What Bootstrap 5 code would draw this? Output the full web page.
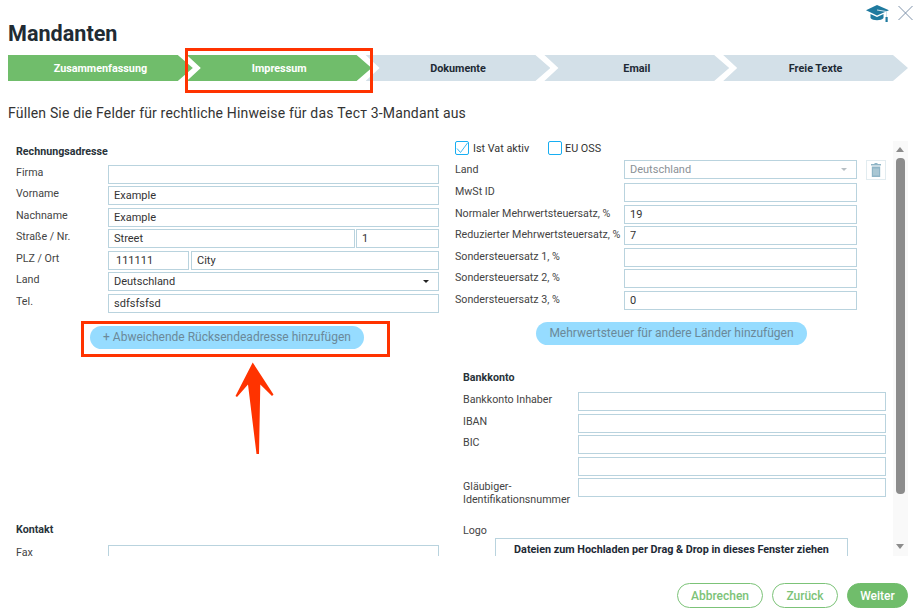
<!DOCTYPE html>
<html lang="de">
<head>
<meta charset="utf-8">
<title>Mandanten</title>
<link href="https://cdn.jsdelivr.net/npm/bootstrap@5.3.0/dist/css/bootstrap.min.css" rel="stylesheet">
<style>
html,body{height:609px;overflow:hidden;background:#fff}
body{font-family:Roboto,"Liberation Sans",sans-serif;font-size:10.8px;color:#333}
.shell{width:917px;height:609px;padding:21px 9px 0 8px}
.page-title{font-size:21.6px;line-height:26px;font-weight:700;color:#212b33;margin:0 0 8px}
.wizard{height:26px}
.wiz-step{flex:1 1 0;margin-left:-6px;height:26px;line-height:27px;text-align:center;font-size:10.8px;font-weight:700;color:#1e2a35;background:#d3e0e8;clip-path:polygon(0 0,calc(100% - 15px) 0,100% 50%,calc(100% - 15px) 100%,0 100%,14px 50%)}
.wiz-step:first-child{margin-left:0;clip-path:polygon(0 0,calc(100% - 15px) 0,100% 50%,calc(100% - 15px) 100%,0 100%)}
.wiz-step.done{background:#70bd6b;color:#fff}
.intro{font-size:14px;line-height:20px;margin:22px 0 7px;color:#333;letter-spacing:.165px}
.scroller{height:426px;overflow:hidden}
.pane-l{width:439px;flex:none;padding:15px 8px 0}
.pane-r{width:446px;flex:none;padding:11px 0 0 8px}
.sec-head{font-size:10.7px;line-height:14px;font-weight:700;color:#29333a}
.sec-first{margin-bottom:5.8px}
.sec-kontakt{margin:174px 0 8px}
.sec-bank{margin:26px 0 7px 8px}
.field{display:flex;height:19px;margin-bottom:2.5px;gap:1px}
.field.tight{gap:0;margin-bottom:2.6px}
.field.first{margin-bottom:4px}
.field.split{gap:2px}
.field.tall{height:auto;margin-bottom:18px}
.field-l{flex:none;line-height:14px;color:#444;white-space:nowrap;font-size:10.7px}
.pane-l .field-l{padding-top:1px}
.pane-r .field-l{padding-top:2px}
.pane-r .first .field-l{padding-top:3px}
.pane-r .bank .field-l{padding-top:1px}
.pane-r .bank .tall .field-l{padding-top:2px;line-height:13px}
.pane-r .bank .logo-l{padding-top:0;height:14px}
.l91{width:91px}.l169{width:169px}.l115{width:115px}
.l91.plz{margin-right:-1px}
.inp.form-control,.inp.form-select{height:19px;min-height:0;padding:0 5px;font-size:11px;line-height:17px;border:1px solid #b9d3de;border-radius:0;color:#333;background-image:none;box-shadow:none}
.w233{width:233px;flex:none}
.w308{width:308px;flex:none}
.w247{width:247px;flex:none}
.w81{width:81px;flex:none}
.inp.pad8.form-control{padding-left:7px}
.sel-wrap{position:relative;flex:1 1 0}
.sel-wrap.w233{flex:none}
.caret-d{position:absolute;right:10px;top:8px;border-left:3px solid transparent;border-right:3px solid transparent;border-top:3px solid #222}
.caret-d.off{border-top-color:#b7bfc4}
.inp.off.form-select{color:#8b9196;background:#fff}
.pill{display:block;height:23px;line-height:23px;padding:0;border:0;border-radius:12px;background:#96dcff;color:#6b8999;text-align:center;font-size:12px}
.pill-a{width:274px;margin:13.2px 0 0 74px}
.pill-b{width:271px;margin:12px 0 0 81px}
.checks{height:14px;margin-bottom:5px;line-height:14px;font-size:10.8px}
.chk-t{padding-top:1px}
.chk-a{width:75px}
.cbx{display:inline-block;width:14px;height:14px;border:1px solid #17aef2;border-radius:2px;margin-right:4px;flex:none}
.cbx.tw{margin-right:3px}
.cbx svg{display:block}
.trash-btn{width:20px;height:20px;margin-left:9px;flex:none;border:1px solid #e2ecf0;display:flex;align-items:center;justify-content:center}
.drop-zone{width:353px;height:40px;margin-left:40px;border:1px solid #b9d3de;font-weight:700;font-size:10.8px;line-height:21px;text-align:center;color:#1e2a35}
.btnx.btn{height:25px;line-height:21px;padding:2px 0 0;border-radius:13px;font-size:12px;font-weight:500;border:1px solid #7cc378;color:#7cc378;background:#fff}
.btnx.fill{background:#70bd6b;color:#fff;border-color:#70bd6b}
.bw86{width:86px}.bw66{width:66px}.bw61{width:61px}
.foot{margin-top:27px;gap:9px}
.sb-track{right:9px;top:141px;width:15px;height:415px;background:#f9f9f9}
.sb-thumb{position:absolute;left:3px;top:17px;width:9px;height:336px;border-radius:4px;background:#8c8c8c}
.sb-up,.sb-dn{position:absolute;left:3px;border-left:4.5px solid transparent;border-right:4.5px solid transparent}
.sb-up{top:6px;border-bottom:5px solid #8c8c8c}
.sb-dn{top:403px;border-top:5px solid #8c8c8c}
.mark-box{border:3px solid #ff3300}
.mb-step{left:185px;top:48px;width:188px;height:45px}
.mb-btn{left:81px;top:321px;width:309px;height:36px}
.over{left:0;top:0}
.tools{right:4px;top:5px;gap:9px}
</style>
</head>
<body>
<div class="shell position-relative">
  <h1 class="page-title">Mandanten</h1>
  <div class="wizard d-flex">
    <div class="wiz-step done">Zusammenfassung</div>
    <div class="wiz-step done">Impressum</div>
    <div class="wiz-step">Dokumente</div>
    <div class="wiz-step">Email</div>
    <div class="wiz-step">Freie Texte</div>
  </div>
  <p class="intro">Füllen Sie die Felder für rechtliche Hinweise für das Тест 3-Mandant aus</p>
  <div class="scroller d-flex">
    <div class="pane-l">
      <div class="sec-head sec-first">Rechnungsadresse</div>
      <div class="field"><span class="field-l l91">Firma</span><input class="inp form-control" value=""></div>
      <div class="field"><span class="field-l l91">Vorname</span><input class="inp form-control" value="Example"></div>
      <div class="field"><span class="field-l l91">Nachname</span><input class="inp form-control" value="Example"></div>
      <div class="field"><span class="field-l l91">Straße / Nr.</span><input class="inp form-control w247" value="Street"><input class="inp form-control" value="1"></div>
      <div class="field split"><span class="field-l l91 plz">PLZ / Ort</span><input class="inp form-control pad8 w81" value="111111"><input class="inp form-control" value="City"></div>
      <div class="field"><span class="field-l l91">Land</span><div class="sel-wrap"><select class="inp form-select"><option>Deutschland</option></select><span class="caret-d"></span></div></div>
      <div class="field"><span class="field-l l91">Tel.</span><input class="inp form-control" value="sdfsfsfsd"></div>
      <button type="button" class="pill pill-a">+ Abweichende Rücksendeadresse hinzufügen</button>
      <div class="sec-head sec-kontakt">Kontakt</div>
      <div class="field"><span class="field-l l91">Fax</span><input class="inp form-control" value=""></div>
    </div>
    <div class="pane-r">
      <div class="checks d-flex align-items-center">
        <span class="cbx"><svg width="12" height="12" viewBox="0 0 12 12"><path d="M1 6.500 4.500 10.500 11.500 1" fill="none" stroke="#3db8f0" stroke-width="1"/></svg></span><span class="chk-t chk-a">Ist Vat aktiv</span>
        <span class="cbx tw"></span><span class="chk-t">EU OSS</span>
      </div>
      <div class="field tight first"><span class="field-l l169">Land</span><div class="sel-wrap w233"><select class="inp form-select off" disabled><option>Deutschland</option></select><span class="caret-d off"></span></div>
        <div class="trash-btn"><svg width="10" height="14" viewBox="0 0 10 14"><path d="M3.500 0h3v1H10v1.500H0V1h3.500z" fill="#8fb5c6"/><path d="M.8 3.500h8.400V14H.8z" fill="#8fb5c6"/><path d="M2.500 5.500h1v7h-1zM4.500 5.500h1v7h-1zM6.500 5.500h1v7h-1z" fill="#c3d8e1"/></svg></div></div>
      <div class="field tight"><span class="field-l l169">MwSt ID</span><input class="inp form-control w233" value=""></div>
      <div class="field tight"><span class="field-l l169">Normaler Mehrwertsteuersatz, %</span><input class="inp form-control w233" value="19"></div>
      <div class="field tight"><span class="field-l l169">Reduzierter Mehrwertsteuersatz, %</span><input class="inp form-control w233" value="7"></div>
      <div class="field tight"><span class="field-l l169">Sondersteuersatz 1, %</span><input class="inp form-control w233" value=""></div>
      <div class="field tight"><span class="field-l l169">Sondersteuersatz 2, %</span><input class="inp form-control w233" value=""></div>
      <div class="field tight"><span class="field-l l169">Sondersteuersatz 3, %</span><input class="inp form-control w233" value="0"></div>
      <button type="button" class="pill pill-b">Mehrwertsteuer für andere Länder hinzufügen</button>
      <div class="sec-head sec-bank">Bankkonto</div>
      <div class="ps-2 bank">
        <div class="field tight"><span class="field-l l115">Bankkonto Inhaber</span><input class="inp form-control w308" value=""></div>
        <div class="field tight"><span class="field-l l115">IBAN</span><input class="inp form-control w308" value=""></div>
        <div class="field tight"><span class="field-l l115">BIC</span><input class="inp form-control w308" value=""></div>
        <div class="field tight"><span class="field-l l115"></span><input class="inp form-control w308" value=""></div>
        <div class="field tight tall"><span class="field-l l115">Gläubiger-<br>Identifikationsnummer</span><input class="inp form-control w308" value=""></div>
        <div class="field-l logo-l">Logo</div>
      </div>
      <div class="drop-zone">Dateien zum Hochladen per Drag &amp; Drop in dieses Fenster ziehen</div>
    </div>
  </div>
  <div class="foot d-flex justify-content-end">
    <button type="button" class="btn btnx bw86">Abbrechen</button>
    <button type="button" class="btn btnx bw66">Zurück</button>
    <button type="button" class="btn btnx fill bw61">Weiter</button>
  </div>

  <div class="sb-track position-absolute"><span class="sb-up"></span><span class="sb-thumb"></span><span class="sb-dn"></span></div>
  <div class="tools position-absolute d-flex align-items-start">
    <svg width="23" height="17" viewBox="0 0 23 17"><path d="M11 0 23 5.200 11 10.400 0 5.200z" fill="#1f7a9f"/><path d="M4.500 9v4c2 3 11 3 13 0V9l-6.500 3z" fill="#1f7a9f"/><path d="M11 5 20.500 6.500V13" fill="none" stroke="#cfe3ec" stroke-width="1"/><rect x="19.500" y="12" width="2.200" height="5" fill="#1f7a9f"/></svg>
    <svg width="15" height="16" viewBox="0 0 15 16"><path d="M.5 1 14.500 15M14.500 1 .5 15" stroke="#7f92aa" stroke-width="1" fill="none"/></svg>
  </div>
  <div class="mark-box mb-step position-absolute"></div>
  <div class="mark-box mb-btn position-absolute"></div>
  <svg class="over position-absolute" width="917" height="609" viewBox="0 0 917 609"><path d="M252.700 362.500 273.500 394.500 272 396 260.300 384.500 259 454 256.500 454 248 384.500 237 397 235.500 396z" fill="#ff3300"/></svg>
</div>
<script src="https://cdn.jsdelivr.net/npm/bootstrap@5.3.0/dist/js/bootstrap.bundle.min.js"></script>
</body>
</html>
